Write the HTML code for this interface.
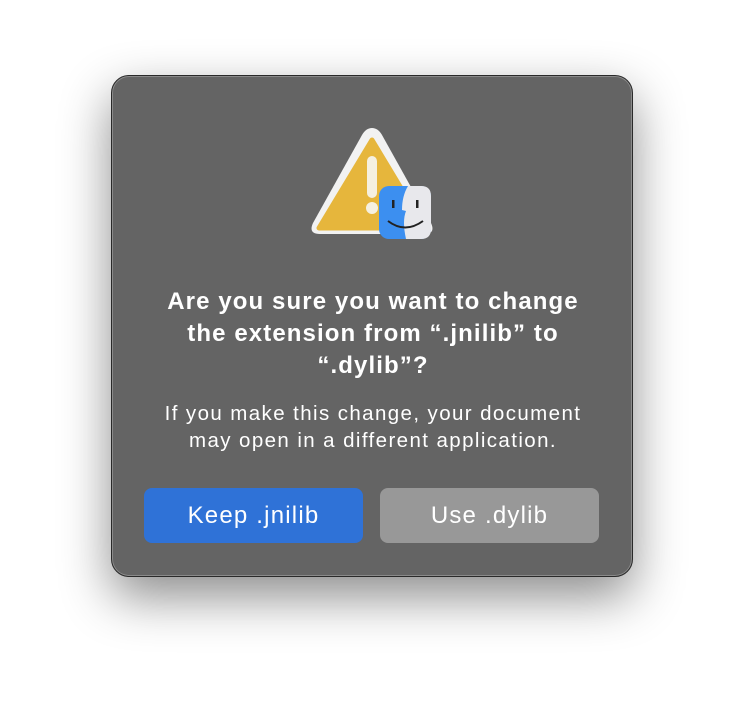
<!DOCTYPE html>
<html><head><style>
body{margin:0;width:744px;height:724px;background:#fff;font-family:"Liberation Sans",sans-serif;position:relative;overflow:hidden}
.dlg{position:absolute;left:111px;top:75px;width:520px;height:500px;background:#646464;border:1px solid #2a2a2a;border-radius:18px;box-shadow:0 0 0 1px #8a8a8a inset,0 20px 50px rgba(0,0,0,.45)}
.t{position:absolute;left:0;width:522px;top:210px;text-align:center;color:#fff;font-weight:bold;font-size:24px;letter-spacing:1.1px;line-height:32px}
.b{position:absolute;left:0;width:522px;top:324px;text-align:center;color:#fff;font-size:20.5px;letter-spacing:1.4px;line-height:27px}
.btn{position:absolute;top:412px;height:55px;width:219px;border-radius:8px;color:#fff;font-size:24px;letter-spacing:1.2px;line-height:55px;text-align:center}
</style></head><body>
<div class="dlg">
<svg style="position:absolute;left:190px;top:45px" width="140" height="125" viewBox="190 45 140 125">
<path d="M260 52 Q266 52 270 59 L319 147 Q324 158 312 158 L208 158 Q196 158 201 147 L250 59 Q254 52 260 52Z" fill="#f2f2f2"/>
<path d="M260 64 L313 152 L207 152 Z" fill="#e6b63c" stroke="#e6b63c" stroke-width="5" stroke-linejoin="round"/>
<rect x="255" y="80" width="10" height="42" rx="5" fill="#f5f0e0"/>
<circle cx="260" cy="132" r="6" fill="#f5f0e0"/>
<rect x="267" y="110" width="52" height="53" rx="10" fill="#3c8ff0"/>
<path d="M296 110 L309 110 Q319 110 319 120 L319 153 Q319 163 309 163 L294 163 Q290 145 294 135 L290 134 Q290 120 296 110Z" fill="#e8e8ec"/>
<path d="M276 145 Q293 158 311 145" stroke="#222" stroke-width="2" fill="none"/>
<rect x="280" y="124" width="2.5" height="8" fill="#222"/><rect x="304" y="124" width="2.5" height="8" fill="#222"/>
</svg>
<div class="t">Are you sure you want to change<br>the extension from “.jnilib” to<br>“.dylib”?</div>
<div class="b">If you make this change, your document<br>may open in a different application.</div>
<div class="btn" style="left:32px;background:#2f72d7">Keep .jnilib</div>
<div class="btn" style="left:268px;background:#989898">Use .dylib</div>
</div>
</body></html>
